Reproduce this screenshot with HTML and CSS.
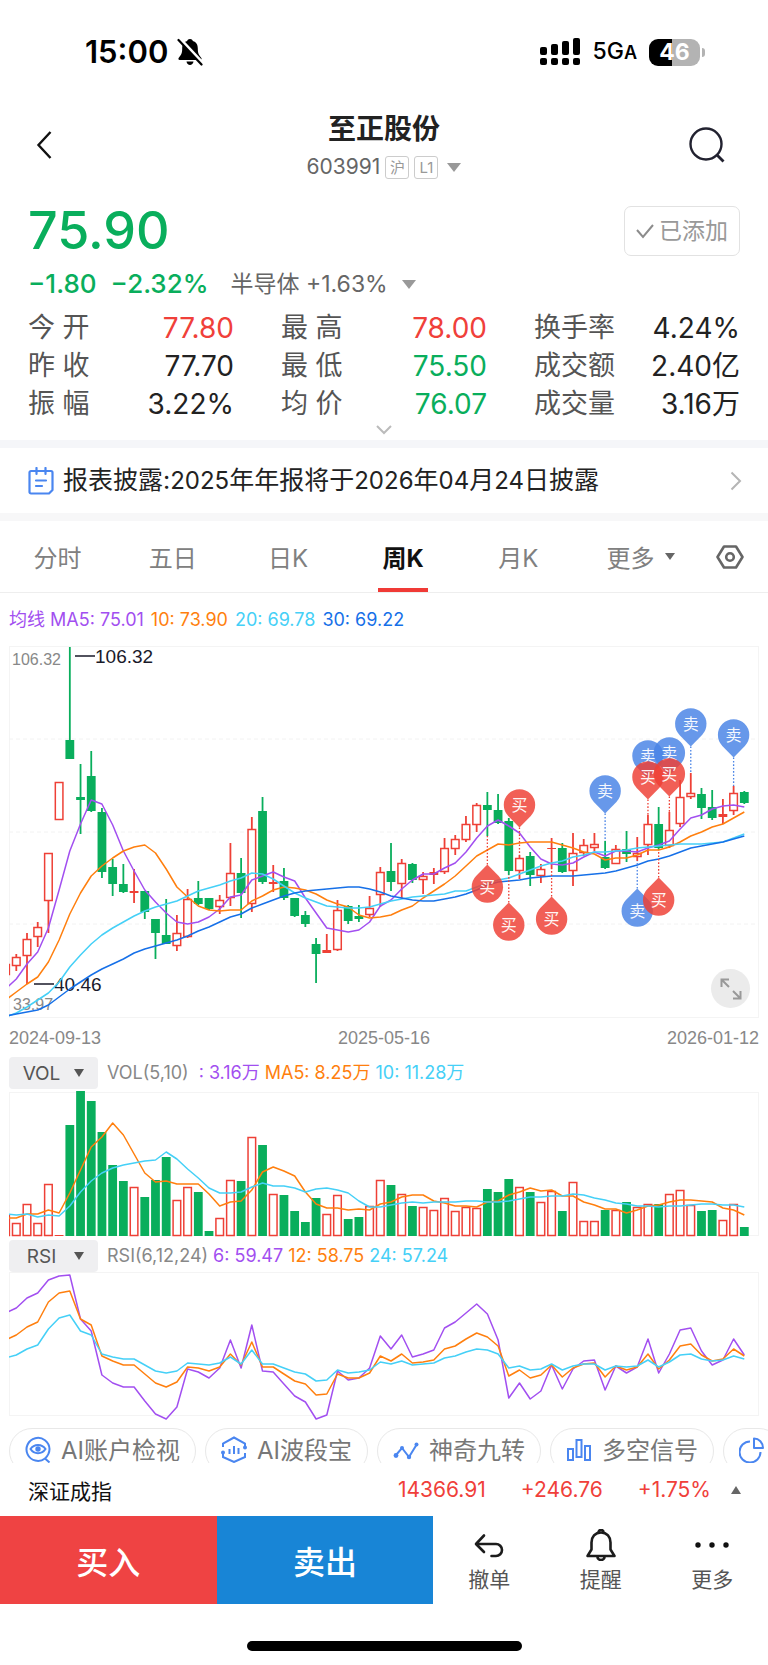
FILE: index.html
```html
<!DOCTYPE html>
<html lang="zh-CN">
<head>
    <meta charset="UTF-8">
    <meta name="viewport" content="width=device-width, initial-scale=1.0">
    <title>至正股份 603991</title>
    <link rel="stylesheet" href="styles.css">
</head>
<body>
    <!-- Status bar -->
    <div class="status-bar">
        <div class="status-left">
            <span class="clock">15:00</span>
            <svg width="26" height="28" viewBox="0 0 26 28">
                <path d="M13 1c-2 0-2.600 1-2.800 2C6.500 4 5.200 7 5.200 10.500c0 5-1.200 6.500-3.400 9.200-.8 1-.4 2.300 1 2.300h20.400c1.400 0 1.800-1.300 1-2.300-2.200-2.700-3.400-4.200-3.400-9.200 0-3.500-1.300-6.500-5-7.500-.2-1-.8-2-2.800-2z" fill="#000"/>
                <path d="M9.500 23.500h7c-.3 2.300-1.800 3.500-3.500 3.500s-3.200-1.200-3.500-3.500z" fill="#000"/>
                <path d="M2.600 1l23 24.500" stroke="#fff" stroke-width="4"/>
                <path d="M1.500 2l23 24.500" stroke="#000" stroke-width="2.200" stroke-linecap="round"/>
            </svg>
        </div>
        <div class="status-right">
            <svg width="40" height="28" viewBox="0 0 40 28">
                <g fill="#000">
                    <rect x="0" y="9" width="7" height="8" rx="2"/>
                    <rect x="11" y="6" width="7" height="11" rx="2"/>
                    <rect x="22" y="3" width="7" height="14" rx="2"/>
                    <rect x="33" y="0" width="7" height="17" rx="2"/>
                    <rect x="0" y="20" width="7" height="7" rx="2"/>
                    <rect x="11" y="20" width="7" height="7" rx="2"/>
                    <rect x="22" y="20" width="7" height="7" rx="2"/>
                    <rect x="33" y="20" width="7" height="7" rx="2"/>
                </g>
            </svg>
            <span class="network">5G<small>A</small></span>
            <span class="battery">46</span>
        </div>
    </div>

    <!-- Title -->
    <header class="header">
        <button class="icon-btn" aria-label="返回">
            <svg width="18" height="30" viewBox="0 0 18 30"><path d="M14.500 2L2.500 15l12 13" fill="none" stroke="#111" stroke-width="2.400"/></svg>
        </button>
        <div class="title">
            <h1>至正股份</h1>
            <div class="code">
                <span>603991</span>
                <span class="tag">沪</span>
                <span class="tag">L1</span>
                <span class="arrow-down"></span>
            </div>
        </div>
        <button class="icon-btn" aria-label="搜索">
            <svg width="38" height="38" viewBox="0 0 38 38"><circle cx="18" cy="18" r="15.500" fill="none" stroke="#222230" stroke-width="2.400"/><path d="M28.500 28.500l7 7" stroke="#222230" stroke-width="2.800"/></svg>
        </button>
    </header>

    <!-- Quote -->
    <section class="quote">
        <div class="price-row">
            <span class="price">75.90</span>
            <button class="added-btn">
                <svg width="18" height="16" viewBox="0 0 18 16"><path d="M1 7l6 7L17 2" fill="none" stroke="#8c8c8c" stroke-width="2"/></svg>
                已添加
            </button>
        </div>
        <div class="change-row">
            <span class="change">−1.80</span>
            <span class="change">−2.32%</span>
            <span class="sector">半导体 +1.63%</span>
            <span class="arrow-down"></span>
        </div>
        <dl class="stats">
            <div><dt>今 开</dt><dd class="up">77.80</dd></div>
            <div><dt>最 高</dt><dd class="up">78.00</dd></div>
            <div><dt>换手率</dt><dd>4.24%</dd></div>
            <div><dt>昨 收</dt><dd>77.70</dd></div>
            <div><dt>最 低</dt><dd class="down">75.50</dd></div>
            <div><dt>成交额</dt><dd>2.40亿</dd></div>
            <div><dt>振 幅</dt><dd>3.22%</dd></div>
            <div><dt>均 价</dt><dd class="down">76.07</dd></div>
            <div><dt>成交量</dt><dd>3.16万</dd></div>
        </dl>
        <button class="expand" aria-label="展开">
            <svg width="16" height="10" viewBox="0 0 16 10"><path d="M1 1l7 7 7-7" fill="none" stroke="#bbb" stroke-width="2"/></svg>
        </button>
    </section>

    <!-- Notice -->
    <a class="notice" href="#">
        <svg width="26" height="28" viewBox="0 0 26 28">
            <g fill="none" stroke="#4a86f0" stroke-width="2.200" stroke-linecap="round">
                <path d="M3 4h20a1.500 1.500 0 0 1 1.500 1.500V23l-3.500 3.500H3A1.500 1.500 0 0 1 1.500 25V5.500A1.500 1.500 0 0 1 3 4z" stroke-linejoin="round"/>
                <path d="M8.500 1v6M17.500 1v6M8 13.500h10M8 19h6"/>
            </g>
        </svg>
        <span class="notice-text">报表披露:<b>2025</b>年年报将于<b>2026</b>年<b>04</b>月<b>24</b>日披露</span>
        <svg width="12" height="20" viewBox="0 0 12 20"><path d="M1.500 1.500L10 10l-8.500 8.500" fill="none" stroke="#b5b5b5" stroke-width="2"/></svg>
    </a>

    <!-- Period tabs -->
    <nav class="tabs">
        <button>分时</button>
        <button>五日</button>
        <button>日K</button>
        <button class="active">周K</button>
        <button>月K</button>
        <button class="more">更多<span class="arrow-small"></span></button>
        <button class="settings" aria-label="设置">
            <svg width="28" height="24" viewBox="0 0 28 24"><path d="M8 1.500h12L26.500 12 20 22.500H8L1.500 12z" fill="none" stroke="#666" stroke-width="2.600" stroke-linejoin="round"/><circle cx="14" cy="12" r="3.800" fill="none" stroke="#666" stroke-width="2.600"/></svg>
        </button>
    </nav>

    <!-- Charts -->
    <main class="charts">
        <div class="legend">
            <span class="c5">均线 MA5: 75.01</span>
            <span class="c10">10: 73.90</span>
            <span class="c20">20: 69.78</span>
            <span class="c30">30: 69.22</span>
        </div>
        <div class="chart-box">
            <svg id="kline" class="chart" viewBox="0 0 750 372"></svg>
            <button class="fullscreen" aria-label="全屏">
                <svg width="22" height="22" viewBox="0 0 22 22"><path d="M1.500 9V1.500H9M2 2l7 7M20.500 13v7.500H13M20 20l-7-7" fill="none" stroke="#999" stroke-width="2"/></svg>
            </button>
        </div>
        <div class="dates">
            <span>2024-09-13</span>
            <span>2025-05-16</span>
            <span>2026-01-12</span>
        </div>

        <div class="indicator">
            <label class="picker">
                <select aria-label="指标一"><option>VOL</option><option>MACD</option></select>
            </label>
            <span>VOL(5,10)</span>
            <span class="c5 vol-now">: 3.16万</span>
            <span class="c10">MA5: 8.25万</span>
            <span class="c20">10: 11.28万</span>
        </div>
        <svg id="vol" class="chart" viewBox="0 0 750 144"></svg>

        <div class="indicator rsi-head">
            <label class="picker">
                <select aria-label="指标二"><option>RSI</option><option>KDJ</option></select>
            </label>
            <span>RSI(6,12,24)</span>
            <span class="c5">6: 59.47</span>
            <span class="c10">12: 58.75</span>
            <span class="c20">24: 57.24</span>
        </div>
        <svg id="rsi" class="chart" viewBox="0 0 750 144"></svg>
    </main>

    <!-- Tool chips -->
    <div class="chips">
        <button>
            <svg width="26" height="28" viewBox="0 0 26 28"><g fill="none" stroke="#4a86f0" stroke-width="2"><path d="M20 22.500A11.500 11.500 0 1 1 24.500 13c0 4-1.800 7-4.500 9.500l4.500 4"/><path d="M5.500 13c3.500-5.500 11.500-5.500 15 0-3.500 5.500-11.500 5.500-15 0z"/></g><circle cx="13" cy="13" r="2.700" fill="#4a86f0"/></svg>
            AI账户检视
        </button>
        <button>
            <svg width="26" height="28" viewBox="0 0 26 28"><g fill="none" stroke="#4a86f0" stroke-width="2"><path d="M2 11V7.500L13 1.500 24 7.500V11M24 17v4l-11 5-11-5v-4"/><path d="M8.500 13v5M13 10v8M17.500 12v6"/></g><circle cx="24" cy="11.500" r="2" fill="#4a86f0"/><circle cx="2" cy="16.500" r="2" fill="#4a86f0"/></svg>
            AI波段宝
        </button>
        <button>
            <svg width="26" height="28" viewBox="0 0 26 28"><path d="M3 19l6-7 7 9 8-13" fill="none" stroke="#4a86f0" stroke-width="2"/><g fill="#4a86f0"><circle cx="3" cy="19.500" r="2.400"/><circle cx="9" cy="12" r="2"/><circle cx="16" cy="21" r="2.200"/><circle cx="23.500" cy="8.500" r="2"/></g></svg>
            神奇九转
        </button>
        <button>
            <svg width="26" height="28" viewBox="0 0 26 28"><g fill="none" stroke="#4a86f0" stroke-width="2"><rect x="2" y="13" width="5" height="11"/><rect x="10.500" y="4" width="5" height="17"/><rect x="19" y="10" width="5" height="14"/></g></svg>
            多空信号
        </button>
        <button aria-label="筹码">
            <svg width="26" height="28" viewBox="0 0 26 28"><g fill="none" stroke="#4a86f0" stroke-width="2"><path d="M11 5.500A10.500 10.500 0 1 0 21.500 16"/><path d="M15 2.500V12h9c0-5.500-4-9.500-9-9.500z" stroke-linejoin="round"/></g></svg>
        </button>
    </div>

    <!-- Index ticker -->
    <div class="ticker">
        <span class="ticker-name">深证成指</span>
        <span class="up">14366.91</span>
        <span class="up">+246.76</span>
        <span class="up">+1.75%</span>
        <span class="arrow-up"></span>
    </div>

    <!-- Trade bar -->
    <footer class="trade-bar">
        <button class="buy">买入</button>
        <button class="sell">卖出</button>
        <div class="actions">
            <button>
                <svg width="32" height="32" viewBox="0 0 32 32"><path d="M11 6.500L3 15l8 8M3.500 15H23a6 6 0 0 1 0 12h-4.500" fill="none" stroke="#1c1c1c" stroke-width="2.600" stroke-linecap="round" stroke-linejoin="round"/></svg>
                撤单
            </button>
            <button>
                <svg width="32" height="32" viewBox="0 0 32 32"><g fill="none" stroke="#1c1c1c" stroke-width="2.600" stroke-linejoin="round"><path d="M16 3.500c-6 0-9.500 4.500-9.500 10v7L2.500 27h27l-4-6.500v-7c0-5.500-3.500-10-9.500-10z"/><path d="M13.500 3.500a2.500 2.500 0 0 1 5 0M12.500 28a3.500 3 0 0 0 7 0"/></g></svg>
                提醒
            </button>
            <button>
                <svg width="34" height="32" viewBox="0 0 34 32"><g fill="#111"><circle cx="3" cy="16" r="2.700"/><circle cx="17" cy="16" r="2.700"/><circle cx="31" cy="16" r="2.700"/></g></svg>
                更多
            </button>
        </div>
    </footer>
    <div class="home-bar"></div>

    <script src="script.js"></script>
</body>
</html>
```
FILE: styles.css
```css
* {
    box-sizing: border-box;
}

body {
    margin: 0;
    background: #fff;
    color: #222;
    font-family: Inter, "Noto Sans CJK SC", sans-serif;
    overflow-x: hidden;
}

button {
    border: none;
    background: none;
    padding: 0;
    margin: 0;
    font-family: inherit;
    color: inherit;
    cursor: pointer;
}

svg {
    display: block;
    flex: none;
}

.up {
    color: #f0403a;
}

.down {
    color: #09ae5c;
}

.arrow-down {
    border: 7px solid transparent;
    border-top: 9px solid #999;
    border-bottom: none;
}

.arrow-small {
    border: 5px solid transparent;
    border-top: 7px solid #666;
    border-bottom: none;
}

.arrow-up {
    border: 5px solid transparent;
    border-bottom: 8px solid #666;
    border-top: none;
}

/* Status bar */
.status-bar {
    display: flex;
    justify-content: space-between;
    align-items: center;
    height: 104px;
    padding: 0 63px 0 85px;
    color: #000;
}

.status-left, .status-right {
    display: flex;
    align-items: center;
}

.status-left {
    gap: 9px;
}

.status-right {
    gap: 12px;
}

.clock {
    font-size: 31px;
    font-weight: 600;
    line-height: 36px;
}

.network {
    font-size: 23px;
    font-weight: 500;
    line-height: 32px;
}

.network small {
    font-size: 18px;
    font-weight: 600;
}

.battery {
    position: relative;
    width: 51px;
    margin-right: 5px;
    border-radius: 9px;
    background: linear-gradient(to right, #000 46%, #b3b3b3 46%);
    color: #fff;
    font-size: 23px;
    font-weight: 700;
    line-height: 27px;
    text-align: center;
}

.battery::after {
    content: "";
    position: absolute;
    right: -5px;
    top: 9px;
    width: 3px;
    height: 9px;
    border-radius: 0 3px 3px 0;
    background: #b3b3b3;
}

/* Title */
.header {
    display: flex;
    justify-content: space-between;
    align-items: center;
    height: 82px;
    padding: 0 36px;
}

.icon-btn {
    display: flex;
    width: 44px;
}

.title {
    text-align: center;
}

.title h1 {
    margin: 0;
    font-size: 28px;
    font-weight: 700;
    line-height: 40px;
}

.code {
    display: flex;
    justify-content: center;
    align-items: center;
    gap: 5px;
    margin-top: 4px;
    font-size: 21px;
    line-height: 28px;
    color: #666;
}

.tag {
    width: 24px;
    border: 1px solid #ccc;
    border-radius: 3px;
    font-size: 15px;
    line-height: 21px;
    color: #999;
}

.code .arrow-down {
    margin-left: 4px;
}

/* Quote */
.quote {
    padding: 12px 28px 0;
    border-bottom: 8px solid #f5f6f9;
}

.price-row {
    display: flex;
    justify-content: space-between;
    align-items: center;
    height: 66px;
}

.price {
    font-size: 52px;
    font-weight: 500;
    line-height: 64px;
    color: #09ae5c;
}

.added-btn {
    display: flex;
    align-items: center;
    gap: 5px;
    height: 50px;
    padding: 0 11px;
    border: 1px solid #e2e2e2;
    border-radius: 7px;
    font-size: 23px;
    line-height: 30px;
    color: #999;
}

.change-row {
    display: flex;
    align-items: center;
    gap: 14px;
    line-height: 40px;
}

.change {
    font-size: 26px;
    font-weight: 500;
    color: #09ae5c;
}

.sector {
    margin-left: 8px;
    font-size: 23px;
    color: #666;
}

.stats {
    display: grid;
    grid-template-columns: repeat(3, 1fr);
    column-gap: 47px;
    margin: 5px 0 0;
    line-height: 38px;
}

.stats div {
    display: flex;
    justify-content: space-between;
    white-space: nowrap;
}

.stats dt {
    font-size: 27px;
    color: #555;
}

.stats dd {
    margin: 0;
    font-size: 28px;
}

.expand {
    display: block;
    margin: 0 auto;
    padding: 2px 0 5px;
}

/* Notice */
.notice {
    display: flex;
    align-items: center;
    height: 73px;
    padding: 0 26px 0 28px;
    border-bottom: 8px solid #f7f7f8;
    color: #222;
    text-decoration: none;
}

.notice-text {
    flex: 1;
    margin-left: 9px;
    font-size: 25px;
    line-height: 36px;
}

.notice-text b {
    font-size: 24px;
    font-weight: 400;
}

/* Tabs */
.tabs {
    display: flex;
    height: 72px;
    border-bottom: 1px solid #eee;
}

.tabs button {
    display: flex;
    flex: 0 0 15%;
    justify-content: center;
    align-items: center;
    font-size: 24px;
    color: #808080;
}

.tabs .active {
    position: relative;
    font-weight: 700;
    color: #111;
}

.tabs .active::after {
    content: "";
    position: absolute;
    left: 50%;
    bottom: 0;
    width: 50px;
    height: 4px;
    margin-left: -25px;
    background: #f03a36;
}

.tabs .more {
    gap: 10px;
    padding-left: 14px;
}

.tabs .settings {
    flex: 1;
}

/* Charts */
.charts {
    padding: 0 9px;
}

.legend, .indicator {
    display: flex;
    gap: 5px;
    font-size: 18px;
    white-space: nowrap;
    color: #888;
}

.legend {
    gap: 7px;
    line-height: 53px;
}

.c5 {
    color: #a24ff0;
}

.c10 {
    color: #ff7f0e;
}

.c20 {
    color: #45d0f7;
}

.c30 {
    color: #1670e8;
}

.chart {
    width: 100%;
    height: auto;
    overflow: visible;
}

.chart text {
    font-family: "Liberation Sans", "Noto Sans CJK SC", sans-serif;
}

.chart-box {
    position: relative;
}

.fullscreen {
    position: absolute;
    right: 9px;
    bottom: 10px;
    display: flex;
    justify-content: center;
    align-items: center;
    width: 39px;
    height: 39px;
    border-radius: 50%;
    background: #ebebeb;
}

.dates {
    display: flex;
    justify-content: space-between;
    height: 39px;
    font-family: "Liberation Sans", sans-serif;
    font-size: 18px;
    line-height: 41px;
    color: #888;
}

.indicator {
    height: 35px;
    line-height: 32px;
}

.rsi-head {
    margin-top: 4px;
    height: 32px;
}

.indicator .vol-now {
    margin-left: 5px;
}

.picker {
    position: relative;
    width: 89px;
    height: 32px;
    margin-right: 4px;
}

.picker::after {
    content: "";
    position: absolute;
    right: 14px;
    top: 12px;
    border: 5px solid transparent;
    border-top: 8px solid #555;
    border-bottom: none;
    pointer-events: none;
}

.picker select {
    display: block;
    width: 100%;
    height: 32px;
    padding: 0 24px 0 0;
    border: none;
    border-radius: 4px;
    background: #efeff1;
    appearance: none;
    font-family: inherit;
    font-size: 19px;
    text-align-last: center;
    color: #555;
}

/* Tool chips */
.chips {
    display: flex;
    gap: 9px;
    height: 47px;
    padding: 12px 0 0 9px;
    overflow: hidden;
}

.chips button {
    display: flex;
    flex: none;
    align-items: flex-start;
    gap: 9px;
    height: 46px;
    padding: 9px 15px 0;
    border: 1px solid #e8e8e8;
    border-radius: 23px;
    font-size: 24px;
    line-height: 26px;
    color: #777;
}

.chips svg {
    margin: -2px 1px 0 0;
}

/* Index ticker */
.ticker {
    display: flex;
    align-items: center;
    height: 53px;
    padding: 0 27px 0 28px;
    font-size: 21px;
}

.ticker .up {
    margin-right: 35px;
}

.ticker .up:nth-last-child(2) {
    margin-right: 20px;
}

.ticker-name {
    flex: 1;
    color: #111;
}

/* Trade bar */
.trade-bar {
    display: flex;
    height: 88px;
}

.buy, .sell {
    flex: 217;
    font-size: 32px;
    font-weight: 500;
}

.trade-bar .buy {
    background: #ef4343;
    color: #fff;
}

.trade-bar .sell {
    background: #1885d6;
    color: #fff;
}

.actions {
    display: flex;
    flex: 335;
}

.actions button {
    display: flex;
    flex: 1;
    flex-direction: column;
    align-items: center;
    gap: 5px;
    padding-top: 13px;
    font-size: 21px;
    line-height: 28px;
    color: #555;
}

.home-bar {
    width: 275px;
    height: 10px;
    margin: 37px auto 13px;
    border-radius: 5px;
    background: #000;
}
```
FILE: script.js
```js
const NS = 'http://www.w3.org/2000/svg';
const RED = '#ee4036';
const GREEN = '#09ae5c';
const BLUE = '#4a84e6';
const STEP = 10.706;

// direction, high, body top, body bottom, low
const candles = [
    ['u', 318, 318, 329, 329], ['u', 308, 311, 320, 325], ['u', 287, 293, 310, 338], ['u', 276, 281, 291, 301],
    ['u', 207, 207, 255, 287], ['u', 136, 136, 174, 174], ['d', 1, 94, 113, 113], ['d', 118, 151, 154, 188],
    ['d', 105, 130, 165, 166], ['d', 162, 166, 226, 232], ['d', 213, 221, 238, 250], ['d', 218, 238, 246, 247],
    ['u', 223, 245, 247, 257], ['d', 245, 245, 266, 273], ['d', 273, 273, 287, 313], ['d', 253, 289, 298, 298],
    ['u', 269, 287, 300, 305], ['u', 243, 253, 291, 292], ['d', 235, 252, 258, 259], ['d', 252, 252, 263, 264],
    ['u', 249, 254, 261, 268], ['u', 197, 227, 252, 260], ['d', 212, 227, 247, 272], ['u', 171, 183, 258, 266],
    ['d', 151, 165, 236, 238], ['u', 219, 236, 238, 246], ['d', 222, 235, 252, 254], ['d', 252, 252, 270, 271],
    ['d', 265, 269, 278, 281], ['d', 292, 298, 308, 337], ['u', 288, 304, 307, 307], ['u', 254, 264, 304, 305],
    ['d', 259, 260, 275, 278], ['d', 259, 270, 273, 276], ['u', 250, 262, 269, 271], ['u', 221, 226, 249, 261],
    ['d', 197, 225, 236, 245], ['u', 213, 217, 238, 253], ['d', 217, 218, 234, 237], ['u', 226, 230, 234, 248],
    ['u', 222, 226, 229, 238], ['u', 192, 202, 226, 228], ['u', 189, 193, 203, 209], ['u', 170, 178, 194, 196],
    ['u', 157, 159, 179, 186], ['d', 146, 159, 164, 190], ['d', 148, 164, 177, 178], ['d', 172, 175, 225, 229],
    ['u', 209, 212, 225, 233], ['d', 206, 210, 229, 240], ['u', 218, 223, 230, 237], ['u', 192, 202, 203, 223],
    ['d', 197, 202, 226, 227], ['u', 187, 207, 225, 240], ['u', 193, 199, 207, 210], ['u', 187, 198, 202, 205],
    ['d', 195, 211, 222, 223], ['u', 199, 203, 218, 218], ['d', 185, 203, 208, 216], ['u', 191, 207, 211, 215],
    ['u', 169, 178, 199, 209], ['d', 161, 178, 202, 204], ['u', 166, 184, 200, 202], ['u', 134, 151, 178, 181],
    ['u', 127, 147, 151, 153], ['d', 142, 148, 162, 173], ['d', 144, 161, 172, 174], ['u', 153, 168, 171, 178],
    ['u', 140, 147, 165, 169], ['d', 145, 146, 157, 158]
];

const ma5 = [343, 333, 318, 306, 282, 244, 205, 178, 154, 158, 179, 205, 225, 244, 256, 267, 276, 278, 276, 271, 263, 251, 249, 234, 230, 226, 231, 235, 252, 267, 282, 284, 286, 284, 276, 260, 254, 243, 234, 228, 228, 222, 217, 206, 192, 180, 174, 180, 187, 201, 213, 218, 219, 217, 211, 206, 210, 205, 205, 206, 202, 199, 195, 183, 172, 169, 163, 160, 159, 161];
const ma10 = [354, 346, 338, 331, 316, 294, 268, 247, 230, 220, 212, 205, 201, 199, 207, 223, 241, 251, 260, 264, 265, 264, 264, 255, 250, 244, 241, 242, 244, 248, 254, 258, 261, 269, 272, 271, 269, 264, 260, 252, 245, 238, 230, 220, 210, 204, 198, 199, 197, 196, 196, 196, 199, 202, 206, 208, 214, 212, 212, 209, 204, 204, 201, 196, 190, 186, 181, 178, 172, 166];
const ma20 = [371, 367, 361, 354, 347, 336, 321, 309, 298, 289, 282, 276, 270, 265, 261, 258, 255, 250, 245, 242, 239, 235, 232, 227, 228, 233, 240, 247, 252, 256, 260, 261, 262, 262, 261, 258, 255, 253, 251, 250, 249, 248, 245, 245, 241, 237, 234, 232, 228, 224, 220, 217, 215, 211, 209, 206, 206, 205, 204, 202, 201, 200, 199, 198, 198, 198, 197, 196, 192, 188];
const ma30 = [370, 368, 366, 364, 359, 351, 343, 336, 329, 323, 318, 313, 307, 303, 300, 297, 294, 290, 285, 281, 276, 271, 268, 262, 258, 254, 250, 247, 245, 244, 243, 242, 241, 241, 243, 246, 250, 252, 254, 255, 255, 253, 251, 248, 244, 239, 236, 235, 234, 232, 231, 230, 230, 230, 229, 228, 227, 225, 222, 219, 215, 213, 210, 206, 202, 200, 198, 196, 193, 190];

const volume = [21, 13, 32, 13, 52, 1, 111, 145, 135, 104, 71, 55, 49, 39, 56, 79, 36, 49, 44, 5, 18, 56, 55, 99, 91, 42, 41, 25, 14, 38, 22, 41, 17, 19, 30, 56, 51, 42, 30, 29, 26, 38, 25, 29, 28, 47, 44, 57, 49, 44, 34, 45, 25, 54, 15, 15, 26, 26, 34, 29, 32, 32, 42, 46, 31, 25, 26, 16, 32, 9];
const volMa5 = [126, 126, 122, 122, 118, 121, 101, 78, 55, 45, 31, 43, 62, 81, 90, 89, 92, 92, 92, 102, 114, 110, 109, 98, 80, 75, 79, 84, 100, 112, 116, 116, 118, 117, 118, 112, 110, 105, 103, 103, 109, 111, 114, 114, 115, 110, 109, 103, 100, 96, 99, 98, 104, 104, 110, 113, 117, 117, 121, 118, 114, 113, 110, 108, 108, 109, 110, 116, 118, 123];
const volMa10 = [122, 123, 122, 125, 123, 124, 114, 100, 89, 81, 76, 73, 71, 69, 68, 60, 67, 77, 86, 96, 101, 101, 100, 95, 91, 94, 94, 96, 100, 97, 96, 98, 101, 109, 115, 115, 113, 111, 110, 111, 110, 110, 110, 109, 109, 110, 110, 109, 107, 105, 105, 104, 104, 102, 103, 106, 108, 111, 112, 114, 114, 115, 114, 114, 113, 112, 112, 113, 113, 115];

const rsi6 = [41, 36, 26, 21, 8, 4, 3, 47, 59, 103, 111, 115, 115, 129, 142, 147, 135, 97, 100, 106, 96, 68, 96, 53, 99, 100, 112, 124, 130, 147, 143, 99, 108, 106, 96, 64, 77, 63, 85, 82, 78, 56, 50, 41, 32, 42, 68, 126, 111, 127, 119, 93, 117, 97, 89, 88, 118, 94, 101, 95, 67, 101, 82, 58, 56, 79, 93, 88, 67, 83];
const rsi12 = [68, 63, 55, 50, 30, 21, 19, 47, 53, 84, 89, 93, 93, 102, 111, 115, 110, 95, 96, 99, 95, 82, 93, 70, 95, 95, 102, 109, 112, 123, 122, 102, 106, 106, 101, 84, 89, 82, 91, 90, 88, 77, 74, 67, 61, 65, 74, 104, 98, 106, 103, 93, 105, 96, 92, 91, 105, 94, 98, 95, 82, 97, 88, 74, 72, 83, 89, 87, 77, 84];
const rsi24 = [86, 83, 77, 73, 57, 46, 43, 59, 63, 82, 85, 87, 87, 93, 99, 101, 99, 91, 92, 93, 91, 85, 92, 78, 92, 92, 96, 100, 102, 109, 108, 98, 101, 100, 98, 90, 92, 89, 93, 92, 91, 86, 84, 80, 77, 78, 82, 96, 94, 98, 97, 92, 98, 94, 92, 92, 98, 94, 95, 94, 88, 95, 90, 83, 82, 87, 89, 88, 84, 87];

// candle index, side, circle centre, end of the dotted line
const pins = [
    [45, '买', 241, 190], [47, '买', 279, 229], [48, '买', 159, 209], [51, '买', 273, 223],
    [56, '卖', 145, 195], [59, '卖', 265, 215], [60, '卖', 110, 169], [60, '买', 131, 169],
    [61, '买', 254, 204], [62, '卖', 107, 166], [62, '买', 128, 166], [64, '卖', 78, 127],
    [68, '卖', 89, 140]
];

function add(parent, name, attrs, text) {
    const el = document.createElementNS(NS, name);
    for (const key in attrs) {
        el.setAttribute(key, attrs[key]);
    }
    if (text) {
        el.textContent = text;
    }
    parent.appendChild(el);
    return el;
}

function xAt(i) {
    return 7.3 + STEP * (i - 1);
}

function frame(svg, height) {
    const id = svg.id + '-clip';
    const clip = add(svg, 'clipPath', { id: id });
    add(clip, 'rect', { x: 0, y: -4, width: 750, height: height + 10 });
    add(svg, 'rect', { x: 0.5, y: 0.5, width: 749, height: height - 1, fill: 'none', stroke: '#f4f4f4' });
    return add(svg, 'g', { 'clip-path': 'url(#' + id + ')' });
}

function line(g, values, color) {
    const points = values.map((v, i) => xAt(i).toFixed(1) + ',' + v).join(' ');
    add(g, 'polyline', { points: points, fill: 'none', stroke: color, 'stroke-width': 1.5, 'stroke-linejoin': 'round' });
}

function drawBar(g, x, top, bottom, dir) {
    if (dir === 'd') {
        add(g, 'rect', { x: x - 4.4, y: top, width: 8.8, height: bottom - top, fill: GREEN });
    } else if (bottom - top < 4) {
        add(g, 'rect', { x: x - 4.4, y: top, width: 8.8, height: bottom - top, fill: RED });
    } else {
        add(g, 'rect', { x: x - 3.8, y: top + 0.5, width: 7.6, height: bottom - top - 1, fill: '#fff', stroke: RED, 'stroke-width': 1.5 });
    }
}

function drawPin(svg, i, side, cy, end) {
    const x = xAt(i);
    const color = side === '买' ? RED : BLUE;
    const dir = end > cy ? 1 : -1;
    const tip = cy + dir * 22.5;
    const sweep = dir === 1 ? 1 : 0;
    // a sell pin stacked on a buy pin shares the line of the lower one
    const stacked = pins.some(p => p[0] === i && p[2] > cy);
    if (!stacked) {
        add(svg, 'line', { x1: x, y1: tip, x2: x, y2: end, stroke: color, 'stroke-width': 1.3, 'stroke-dasharray': '1.6 1.8' });
    }
    add(svg, 'path', {
        d: `M${x} ${tip}L${x - 11.3} ${cy + dir * 10.9}A15.7 15.7 0 1 ${sweep} ${x + 11.3} ${cy + dir * 10.9}Z`,
        fill: color, 'fill-opacity': 0.84
    });
    add(svg, 'text', { x: x, y: cy + 6, 'font-size': 16, 'text-anchor': 'middle', fill: '#fff', 'fill-opacity': 0.95 }, side);
}

// K line
const kline = document.getElementById('kline');
const kg = frame(kline, 372);
[93, 186, 278].forEach(y => {
    add(kg, 'line', { x1: 0, y1: y, x2: 750, y2: y, stroke: '#f2f2f2', 'stroke-dasharray': '4 3' });
});
add(kline, 'text', { x: 3, y: 19, 'font-size': 16, fill: '#888' }, '106.32');
add(kline, 'text', { x: 4, y: 364, 'font-size': 16, fill: '#888' }, '33.97');
const cg = add(kline, 'g', { 'clip-path': 'url(#kline-clip)' });
candles.forEach(([dir, high, top, bottom, low], i) => {
    const x = xAt(i);
    add(cg, 'line', { x1: x, y1: high, x2: x, y2: low, stroke: dir === 'd' ? GREEN : RED, 'stroke-width': 1.8 });
    drawBar(cg, x, top, bottom, dir);
});
add(kline, 'path', { d: 'M66 10h20M25 338h20', stroke: '#1a1a2a', 'stroke-width': 1.4 });
add(kline, 'text', { x: 86, y: 17, 'font-size': 19, fill: '#1a1a2a' }, '106.32');
add(kline, 'text', { x: 45, y: 345, 'font-size': 19, fill: '#1a1a2a' }, '40.46');
const mg = add(kline, 'g', { 'clip-path': 'url(#kline-clip)' });
line(mg, ma5, '#a24ff0');
line(mg, ma10, '#ff7f0e');
line(mg, ma20, '#45d0f7');
line(mg, ma30, '#1670e8');
pins.forEach(pin => drawPin(kline, ...pin));

// Volume
const vg = frame(document.getElementById('vol'), 144);
volume.forEach((v, i) => drawBar(vg, xAt(i), 144 - v, 144, candles[i][0]));
line(vg, volMa5, '#ff7f0e');
line(vg, volMa10, '#45d0f7');

// RSI
const rg = frame(document.getElementById('rsi'), 144);
line(rg, rsi6, '#a24ff0');
line(rg, rsi12, '#ff7f0e');
line(rg, rsi24, '#45d0f7');
```
